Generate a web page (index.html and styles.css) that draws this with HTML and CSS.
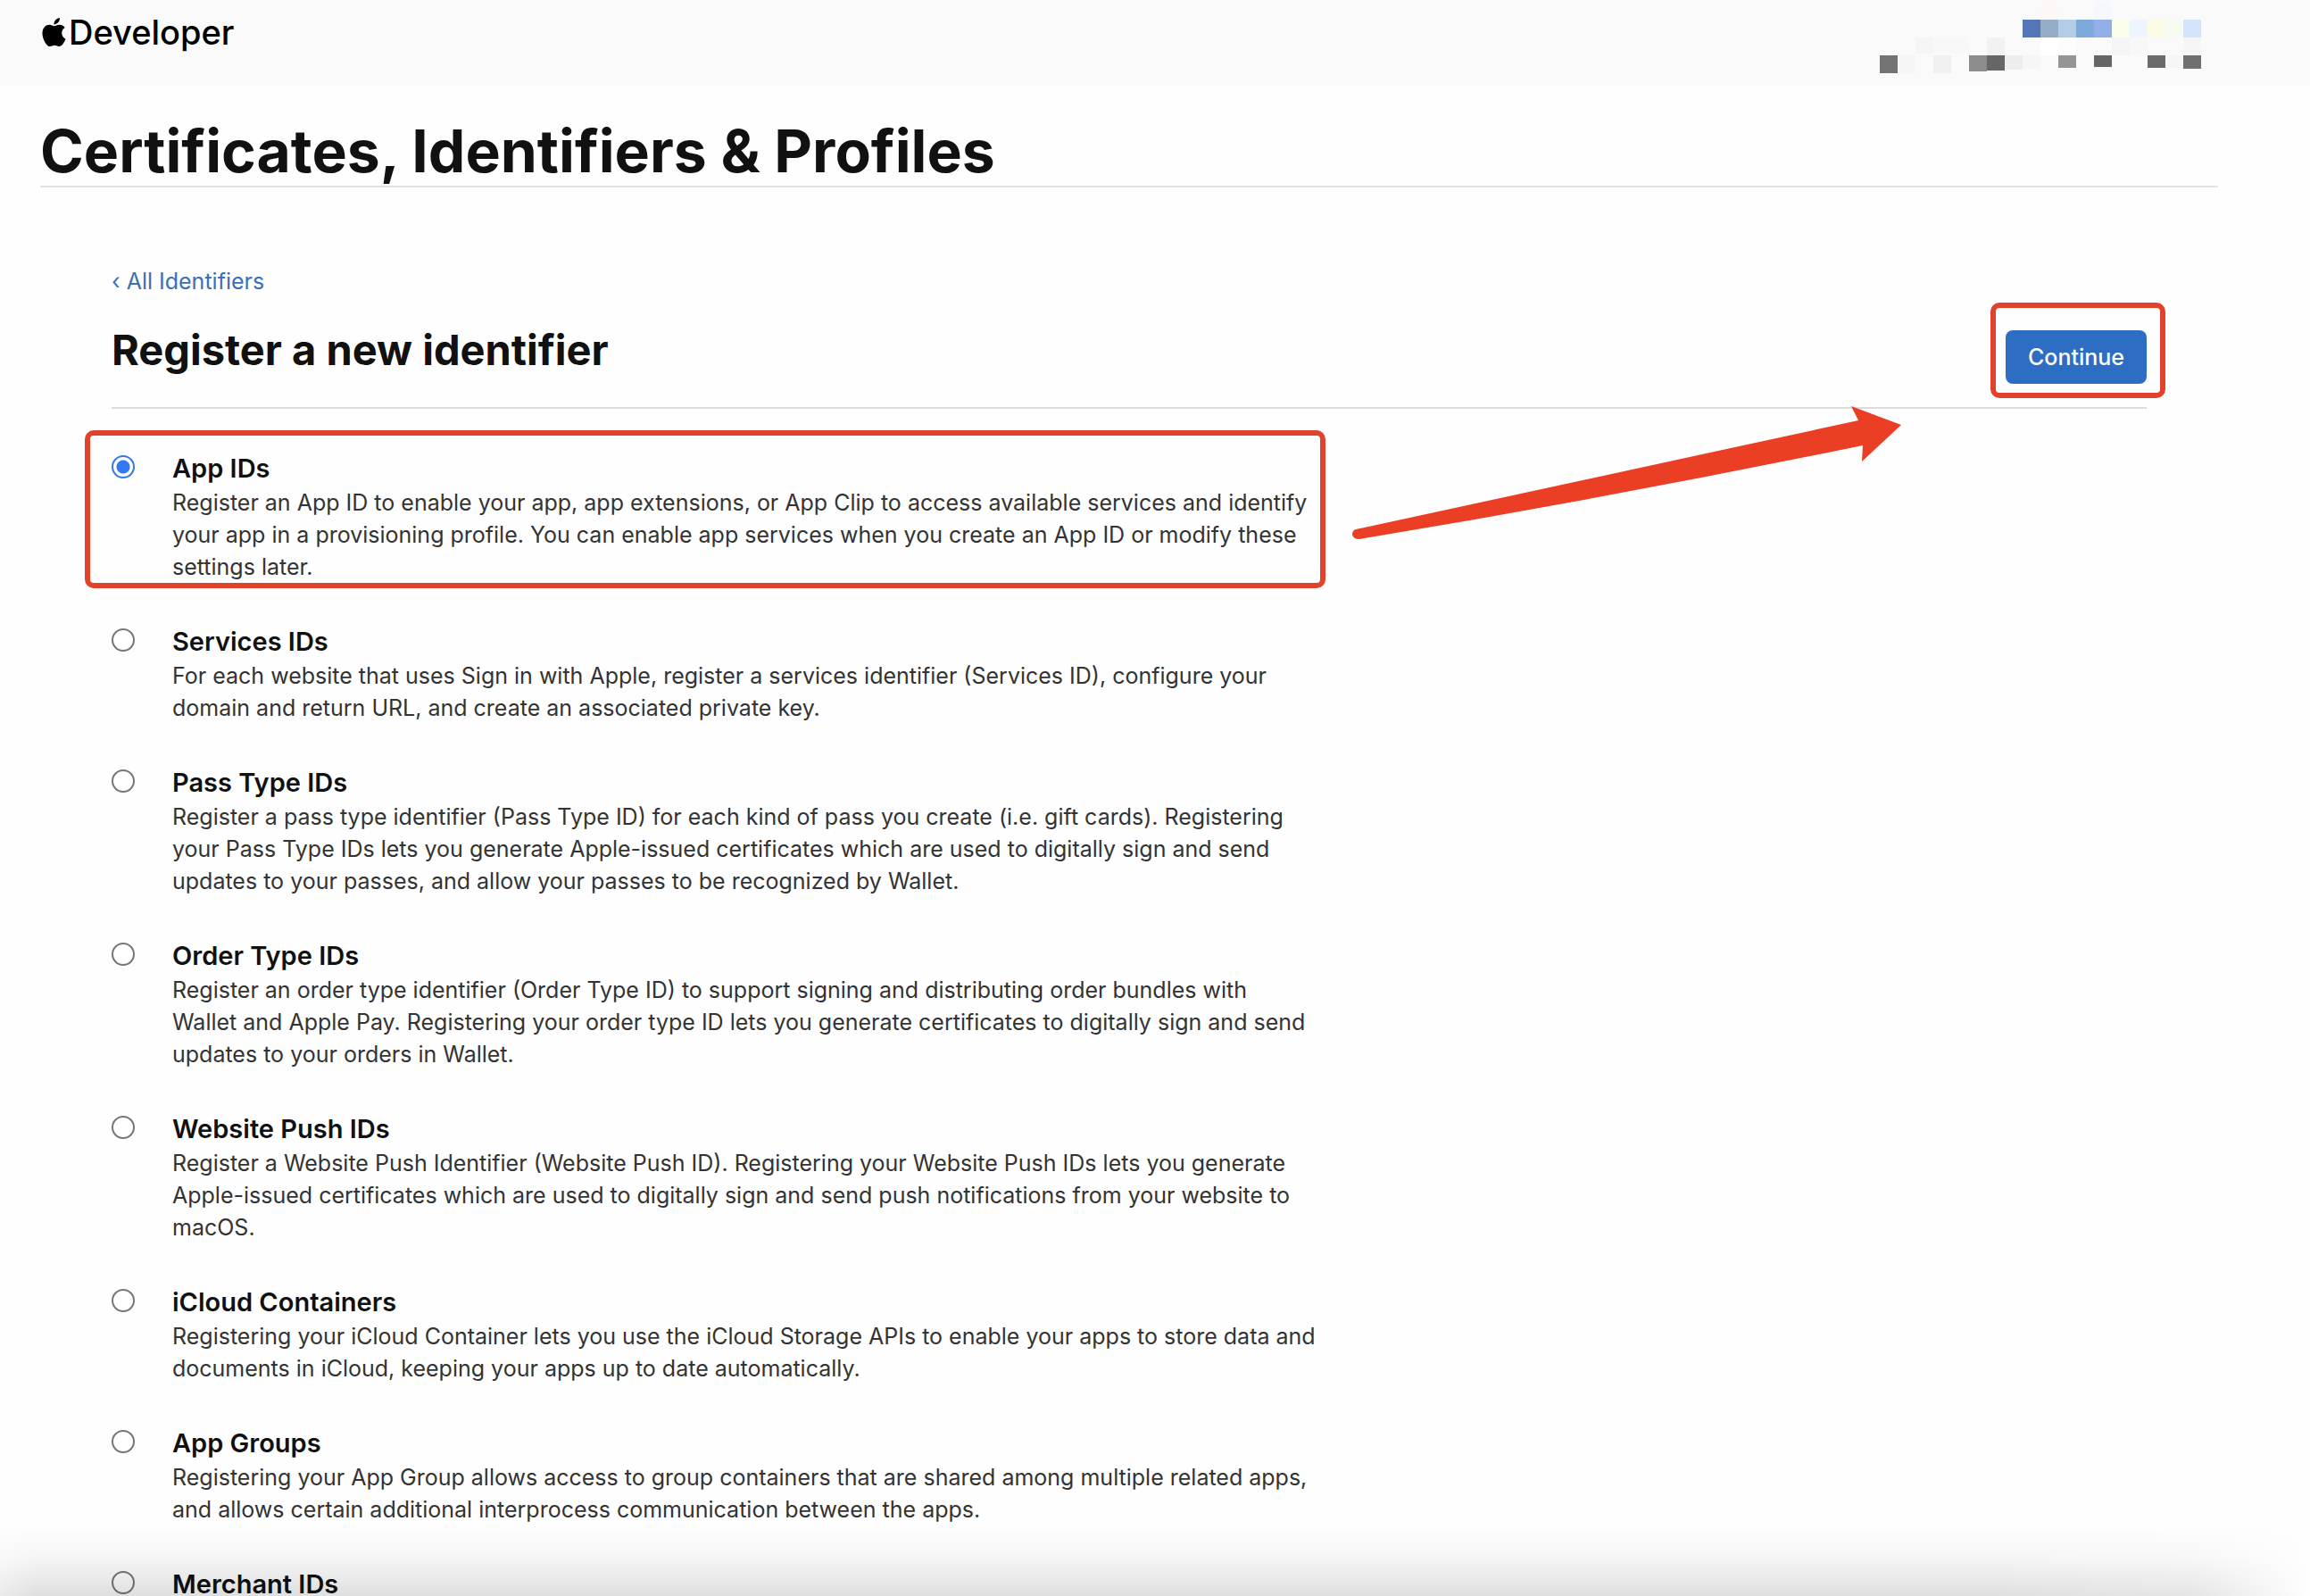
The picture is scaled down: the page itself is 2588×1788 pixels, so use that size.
FILE: index.html
```
<!DOCTYPE html>
<html lang="en">
<head>
    <meta charset="UTF-8">
    <meta name="viewport" content="width=device-width, initial-scale=1.0">
    <title>Certificates, Identifiers &amp; Profiles</title>
    <link rel="stylesheet" href="styles.css">
</head>
<body>
    <header class="topbar">
        <a href="#" class="logo">
            <svg class="logo-mark" viewBox="2 0 20 24" aria-hidden="true">
                <path d="M12.152 6.896c-.948 0-2.415-1.078-3.96-1.04-2.04.027-3.91 1.183-4.961 3.014-2.117 3.675-.546 9.103 1.519 12.09 1.013 1.454 2.208 3.09 3.792 3.039 1.52-.065 2.09-.987 3.935-.987 1.831 0 2.35.987 3.96.948 1.637-.026 2.676-1.48 3.676-2.948 1.156-1.688 1.636-3.325 1.662-3.415-.039-.013-3.182-1.221-3.22-4.857-.026-3.04 2.48-4.494 2.597-4.559-1.429-2.09-3.623-2.324-4.39-2.376-2-.156-3.675 1.09-4.61 1.09zM15.53 3.83c.843-1.012 1.4-2.427 1.245-3.83-1.207.052-2.662.805-3.532 1.818-.78.896-1.454 2.338-1.273 3.714 1.338.104 2.715-.688 3.559-1.701"/>
            </svg>
            <span>Developer</span>
        </a>

        <!-- Account name and team, pixelated -->
        <svg class="account" viewBox="0 0 360 82" shape-rendering="crispEdges" aria-hidden="true">
            <rect x="180" y="2" width="20" height="20" fill="#fdf8f5"/>
            <rect x="240" y="2" width="20" height="20" fill="#f5f9fd"/>
            <rect x="160" y="22" width="20" height="20" fill="#5475b8"/>
            <rect x="180" y="22" width="20" height="20" fill="#96adc7"/>
            <rect x="200" y="22" width="20" height="20" fill="#b4cde6"/>
            <rect x="220" y="22" width="20" height="20" fill="#7eaadb"/>
            <rect x="240" y="22" width="20" height="20" fill="#93afea"/>
            <rect x="260" y="22" width="20" height="20" fill="#f9fdea"/>
            <rect x="280" y="22" width="20" height="20" fill="#eef5fe"/>
            <rect x="300" y="22" width="20" height="20" fill="#fafce6"/>
            <rect x="320" y="22" width="20" height="20" fill="#f6fdf0"/>
            <rect x="340" y="22" width="20" height="20" fill="#d3e4fd"/>
            <rect x="40" y="42" width="20" height="18" fill="#f5f5f5"/>
            <rect x="60" y="42" width="40" height="18" fill="#f8f8f8"/>
            <rect x="120" y="42" width="20" height="20" fill="#f2f2f2"/>
            <rect x="180" y="42" width="20" height="20" fill="#ffffff"/>
            <rect x="200" y="42" width="20" height="20" fill="#fdfdfd"/>
            <rect x="260" y="42" width="20" height="20" fill="#f5f5f5"/>
            <rect x="280" y="42" width="20" height="20" fill="#f8f8f8"/>
            <rect x="340" y="42" width="20" height="20" fill="#f6f6f6"/>
            <rect x="0" y="62" width="20" height="20" fill="#737373"/>
            <rect x="20" y="62" width="20" height="20" fill="#f6f6f6"/>
            <rect x="60" y="62" width="20" height="20" fill="#f0f0f0"/>
            <rect x="100" y="62" width="20" height="18" fill="#8c8c8c"/>
            <rect x="120" y="62" width="20" height="17" fill="#666666"/>
            <rect x="140" y="62" width="20" height="16" fill="#ededed"/>
            <rect x="160" y="62" width="20" height="15" fill="#f6f6f6"/>
            <rect x="200" y="62" width="20" height="14" fill="#959595"/>
            <rect x="240" y="62" width="20" height="13" fill="#666666"/>
            <rect x="300" y="62" width="20" height="14" fill="#6b6b6b"/>
            <rect x="320" y="62" width="20" height="14" fill="#f6f6f6"/>
            <rect x="340" y="62" width="20" height="15" fill="#707070"/>
        </svg>
    </header>

    <main class="page">
        <h1>Certificates, Identifiers &amp; Profiles</h1>

        <form class="content">
            <a href="#" class="back-link">‹ All Identifiers</a>

            <div class="section-header">
                <h2>Register a new identifier</h2>
                <div class="marked marked-button">
                    <button type="submit" class="continue-button">Continue</button>
                </div>
            </div>

            <div class="options">
                <div class="option marked marked-option">
                    <input type="radio" name="identifier" id="appIds" checked>
                    <label for="appIds">
                        <strong>App IDs</strong>
                        <span>Register an App ID to enable your app, app extensions, or App Clip to access available services and identify your app in a provisioning profile. You can enable app services when you create an App ID or modify these settings later.</span>
                    </label>
                </div>
                <div class="option">
                    <input type="radio" name="identifier" id="servicesIds">
                    <label for="servicesIds">
                        <strong>Services IDs</strong>
                        <span>For each website that uses Sign in with Apple, register a services identifier (Services ID), configure your domain and return URL, and create an associated private key.</span>
                    </label>
                </div>
                <div class="option">
                    <input type="radio" name="identifier" id="passTypeIds">
                    <label for="passTypeIds">
                        <strong>Pass Type IDs</strong>
                        <span>Register a pass type identifier (Pass Type ID) for each kind of pass you create (i.e. gift cards). Registering your Pass Type IDs lets you generate Apple-issued certificates which are used to digitally sign and send updates to your passes, and allow your passes to be recognized by Wallet.</span>
                    </label>
                </div>
                <div class="option">
                    <input type="radio" name="identifier" id="orderTypeIds">
                    <label for="orderTypeIds">
                        <strong>Order Type IDs</strong>
                        <span>Register an order type identifier (Order Type ID) to support signing and distributing order bundles with<br>Wallet and Apple Pay. Registering your order type ID lets you generate certificates to digitally sign and send updates to your orders in Wallet.</span>
                    </label>
                </div>
                <div class="option">
                    <input type="radio" name="identifier" id="websitePushIds">
                    <label for="websitePushIds">
                        <strong>Website Push IDs</strong>
                        <span>Register a Website Push Identifier (Website Push ID). Registering your Website Push IDs lets you generate Apple-issued certificates which are used to digitally sign and send push notifications from your website to macOS.</span>
                    </label>
                </div>
                <div class="option">
                    <input type="radio" name="identifier" id="icloudContainers">
                    <label for="icloudContainers">
                        <strong>iCloud Containers</strong>
                        <span>Registering your iCloud Container lets you use the iCloud Storage APIs to enable your apps to store data and documents in iCloud, keeping your apps up to date automatically.</span>
                    </label>
                </div>
                <div class="option">
                    <input type="radio" name="identifier" id="appGroups">
                    <label for="appGroups">
                        <strong>App Groups</strong>
                        <span>Registering your App Group allows access to group containers that are shared among multiple related apps, and allows certain additional interprocess communication between the apps.</span>
                    </label>
                </div>
                <div class="option">
                    <input type="radio" name="identifier" id="merchantIds">
                    <label for="merchantIds">
                        <strong>Merchant IDs</strong>
                    </label>
                </div>
            </div>

            <!-- Arrow from the selected option to the button -->
            <svg class="arrow" viewBox="0 0 615 150" aria-hidden="true">
                <path d="M4 138 L567 16 L559 0 L615 21 L571 62 L572 44 Q290 102 8 149 Q1 149 0 144 Q0 139 4 138 Z"/>
            </svg>
        </form>
    </main>

    <div class="bottom-shade"></div>
</body>
</html>
```
FILE: styles.css
```
/* General Styles */
* {
    box-sizing: border-box;
}

body {
    font-family: Inter, 'Helvetica Neue', Arial, sans-serif;
    font-size: 25px;
    line-height: 36px;
    background: #fefefe;
    margin: 0;
    height: 100vh;
    overflow: hidden;
    color: #333;
}

a {
    color: #3a6fb9;
    text-decoration: none;
}

/* Top bar */
.topbar {
    display: flex;
    justify-content: space-between;
    align-items: flex-start;
    height: 96px;
    padding: 0 122px 0 47px;
    background: #fafafa;
}

.logo {
    display: flex;
    align-items: center;
    gap: 3px;
    margin-top: 16px;
    font-size: 38px;
    font-weight: 500;
    line-height: 40px;
    color: #000;
}

.logo-mark {
    width: 27px;
    height: 32px;
}

.account {
    width: 360px;
    height: 82px;
}

/* Page */
.page {
    margin: 0 103px 0 45px;
}

h1 {
    margin: 0;
    padding-top: 34px;
    border-bottom: 2px solid #e3e3e3;
    font-size: 66px;
    font-weight: 700;
    line-height: 78px;
    color: #111;
}

.content {
    position: relative;
    margin: 0 80px;
    padding-top: 87px;
}

.back-link {
    display: block;
}

.section-header {
    display: flex;
    justify-content: space-between;
    align-items: baseline;
    padding: 31px 0 26px;
    border-bottom: 2px solid #dcdcdc;
}

h2 {
    margin: 0;
    font-size: 47px;
    font-weight: 700;
    line-height: 56px;
    color: #111;
}

.continue-button {
    display: block;
    height: 60px;
    padding: 0 25px;
    border: none;
    border-radius: 8px;
    background: #2d6dc4;
    color: white;
    font: inherit;
    font-weight: 500;
}

/* Red outlines */
.marked {
    position: relative;
}

.marked::after {
    content: "";
    position: absolute;
    border: 6px solid #e0422b;
    border-radius: 10px;
    pointer-events: none;
}

.marked-button::after {
    inset: -31px -21px -16px -17px;
}

.marked-option::after {
    inset: -23px 5px -6px -30px;
}

.arrow {
    position: absolute;
    top: 245px;
    right: 275px;
    width: 615px;
    height: 150px;
    fill: #ea3f25;
}

/* Identifier options */
.options {
    display: flex;
    flex-direction: column;
    gap: 46px;
    max-width: 1365px;
    padding-top: 47px;
}

.option {
    display: flex;
    align-items: flex-start;
    gap: 42px;
}

.option input {
    appearance: none;
    flex: none;
    width: 26px;
    height: 26px;
    margin: 5px 0 0;
    border: 2px solid #767676;
    border-radius: 50%;
    background: white;
}

.option input:checked {
    border-color: #3478f0;
    background: radial-gradient(circle, #3478f6 7px, white 8px);
}

.option label {
    flex: 1;
}

.option strong {
    display: block;
    font-size: 29px;
    font-weight: 600;
    line-height: 40px;
    color: #111;
}

.option span {
    display: block;
}

.bottom-shade {
    position: fixed;
    left: 0;
    right: 0;
    bottom: 0;
    height: 80px;
    background: linear-gradient(rgba(0, 0, 0, 0), rgba(0, 0, 0, 0.03) 45%, rgba(0, 0, 0, 0.12));
    mask-image: linear-gradient(to right, rgba(0, 0, 0, 0.6), black 40px, black 86%, rgba(0, 0, 0, 0.8) 95%, transparent);
    pointer-events: none;
}
```
